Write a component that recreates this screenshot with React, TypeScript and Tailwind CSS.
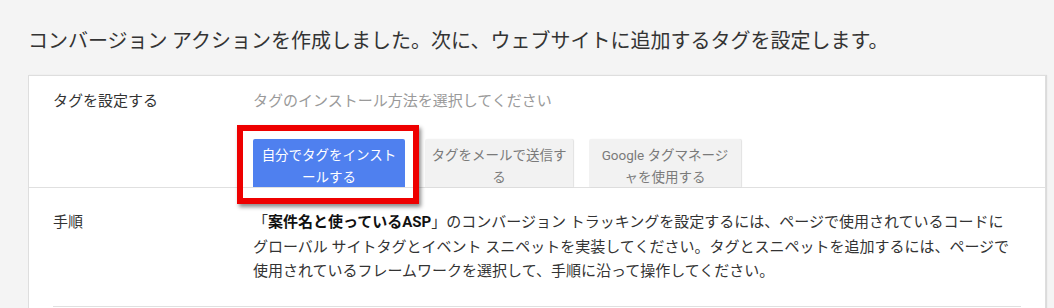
import React from "react";

const font = {
  fontFamily: '"Noto Sans CJK JP", sans-serif',
};

const TagButton: React.FC<{
  lines: string[];
  primary?: boolean;
  width: string;
}> = ({ lines, primary, width }) => (
  <div
    className={`${width} h-[48px] overflow-hidden rounded-t-[2px] pt-[5px] text-center text-[13.5px] leading-[22px] ${
      primary
        ? "bg-[#4f80ef] text-white"
        : "bg-[#f2f2f2] text-[#7a7a7a] shadow-[1px_0_1px_rgba(0,0,0,0.12)]"
    }`}
  >
    {lines.map((l) => (
      <div key={l} className="whitespace-nowrap">
        {l}
      </div>
    ))}
  </div>
);

export default function App() {
  return (
    <div
      className="h-[308px] w-[1054px] overflow-hidden bg-[#f4f4f4] pl-[28px] pt-[26px]"
      style={{ fontFamily: '"Roboto", "Noto Sans CJK JP", sans-serif' }}
    >
      <h1 className="mb-[21px] text-[20px] font-normal leading-[28px] text-[#333333]" style={font}>
        コンバージョン アクションを作成しました。次に、ウェブサイトに追加するタグを設定します。
      </h1>

      <div className="w-[1018px] border border-[#dedede] bg-white shadow-[1px_0_1px_rgba(0,0,0,0.1)]">
        {/* row 1 */}
        <div className="flex border-b border-[#e0e0e0] pl-[24px] pt-[14px]">
          <div className="w-[200px] text-[15px] leading-[22px] text-[#333333]">タグを設定する</div>
          <div>
            <div className="text-[15px] leading-[22px] text-[#9a9a9a]">タグのインストール方法を選択してください</div>
            <div className="relative mt-[27px] flex">
              <TagButton primary width="w-[152px]" lines={["自分でタグをインスト", "ールする"]} />
              <div className="ml-[20px]">
                <TagButton width="w-[148px]" lines={["タグをメールで送信す", "る"]} />
              </div>
              <div className="ml-[16px]">
                <TagButton width="w-[152px]" lines={["Google タグマネージ", "ャを使用する"]} />
              </div>
              <div className="pointer-events-none absolute left-[-16px] top-[-14px] h-[79px] w-[182px] border-[6px] border-[#ee0000] shadow-[2px_3px_4px_rgba(0,0,0,0.45)]" />
            </div>
          </div>
        </div>

        {/* row 2 */}
        <div className="flex pl-[24px] pt-[22px] pb-[22px]">
          <div className="w-[200px] text-[15px] leading-[24.5px] text-[#333333]">手順</div>
          <div className="text-[15px] leading-[24.5px] text-[#333333]">
            <div className="whitespace-nowrap">
              「<span className="font-bold text-[#111111]">案件名と使っているASP</span>」のコンバージョン トラッキングを設定するには、ページで使用されているコードに
            </div>
            <div className="whitespace-nowrap">
              グローバル サイトタグとイベント スニペットを実装してください。タグとスニペットを追加するには、ページで
            </div>
            <div className="whitespace-nowrap">使用されているフレームワークを選択して、手順に沿って操作してください。</div>
          </div>
        </div>
        <div className="mx-[24px] border-t border-[#e0e0e0]" />
        <div className="h-[40px]" />
      </div>
    </div>
  );
}
